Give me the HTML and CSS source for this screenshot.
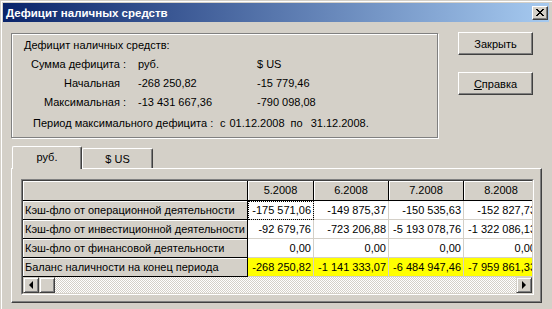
FILE: index.html
```html
<!DOCTYPE html>
<html>
	<head>
		<meta charset="UTF-8">
		<title>Дефицит наличных средств</title>
		<link rel="stylesheet" href="styles.css">
	</head>
	<body>
		<div class="window">
			<div class="caption">
				<span class="caption-text">Дефицит наличных средств</span>
				<span class="close-btn">
					<svg width="8" height="7" viewBox="0 0 8 7" shape-rendering="crispEdges"><path d="M0 0h2v1H0zM6 0h2v1H6zM1 1h2v1H1zM5 1h2v1H5zM2 2h4v1H2zM3 3h2v1H3zM2 4h4v1H2zM1 5h2v1H1zM5 5h2v1H5zM0 6h2v1H0zM6 6h2v1H6z" fill="#000"/></svg>
				</span>
			</div>
			<div class="client">
				<div class="top">
					<div class="group">
						<div class="group-title">Дефицит наличных средств:</div>
						<div class="sums">
							<span class="lbl">Сумма дефицита :</span><span>руб.</span><span>$ US</span>
							<span class="lbl lbl-pad">Начальная</span><span>-268 250,82</span><span>-15 779,46</span>
							<span class="lbl">Максимальная :</span><span>-13 431 667,36</span><span>-790 098,08</span>
						</div>
						<div class="period">
							<span class="period-label">Период максимального дефицита :</span>
							<span>с</span>
							<span class="d1">01.12.2008</span>
							<span class="d2">по</span>
							<span class="d3">31.12.2008.</span>
						</div>
					</div>
					<div class="buttons">
						<div class="btn">Закрыть</div>
						<div class="btn"><u>С</u>правка</div>
					</div>
				</div>
				<div class="tabs">
					<div class="tab tab-active">руб.</div>
					<div class="tab">$ US</div>
				</div>
				<div class="panel">
					<div class="grid">
						<div class="grid-inner">
							<div class="sheet">
								<div class="fx"></div>
								<div class="fx hd">5.2008</div>
								<div class="fx hd">6.2008</div>
								<div class="fx hd">7.2008</div>
								<div class="fx hd">8.2008</div>

								<div class="fx rl">Кэш-фло от операционной деятельности</div>
								<div class="cell focus">-175 571,06</div>
								<div class="cell">-149 875,37</div>
								<div class="cell">-150 535,63</div>
								<div class="cell">-152 827,73</div>

								<div class="fx rl">Кэш-фло от инвестиционной деятельности</div>
								<div class="cell">-92 679,76</div>
								<div class="cell">-723 206,88</div>
								<div class="cell">-5 193 078,76</div>
								<div class="cell">-1 322 086,13</div>

								<div class="fx rl">Кэш-фло от финансовой деятельности</div>
								<div class="cell">0,00</div>
								<div class="cell">0,00</div>
								<div class="cell">0,00</div>
								<div class="cell">0,00</div>

								<div class="fx rl">Баланс наличности на конец периода</div>
								<div class="cell total">-268 250,82</div>
								<div class="cell total">-1 141 333,07</div>
								<div class="cell total">-6 484 947,46</div>
								<div class="cell total">-7 959 861,33</div>
							</div>
							<div class="hscroll">
								<div class="sb-btn"><span class="arr-left"></span></div>
								<div class="sb-btn"></div>
								<div class="sb-track"></div>
								<div class="sb-btn"><span class="arr-right"></span></div>
							</div>
						</div>
					</div>
				</div>
			</div>
		</div>
	</body>
</html>
```

FILE: styles.css
```css
*{
	margin: 0;
	padding: 0;
	box-sizing: border-box;
}
body{
	background: #d4d0c8;
	font-family: "Liberation Sans", Arial, sans-serif;
	font-size: 11px;
	color: #000;
}
.window{
	width: 552px;
	height: 309px;
	overflow: hidden;
	background: #d4d0c8;
	padding: 3px 3px 0 3px;
	box-shadow: inset 1px 1px 0 #d4d0c8, inset 2px 2px 0 #fff;
}
.caption{
	height: 19px;
	display: flex;
	align-items: center;
	padding: 0 1px 0 3px;
	background: linear-gradient(to right, #0a246a, #a6caf0);
}
.caption-text{
	color: #fff;
	font-weight: bold;
	font-size: 11.5px;
}
.close-btn{
	margin-left: auto;
	width: 16px;
	height: 14px;
	display: flex;
	align-items: center;
	justify-content: center;
	background: #d4d0c8;
	border: 1px solid;
	border-color: #fff #404040 #404040 #fff;
	box-shadow: inset -1px -1px 0 #808080;
}
.close-btn svg{
	display: block;
}
.top{
	display: flex;
	align-items: flex-start;
	padding-left: 8px;
}
.group{
	width: 427px;
	height: 105px;
	margin-top: 11px;
	border: 1px solid #808080;
	box-shadow: inset 1px 1px 0 #fff, 1px 1px 0 #fff;
	padding: 2px 0 0 12px;
	line-height: 19px;
}
.sums{
	display: grid;
	grid-template-columns: 102px 107px auto;
	column-gap: 12px;
	grid-auto-rows: 19px;
}
.lbl{
	text-align: right;
}
.lbl-pad{
	padding-right: 6px;
}
.period{
	display: flex;
	margin-top: 2px;
	padding-left: 9px;
}
.period-label{
	width: 187px;
}
.d1{
	margin-left: 4px;
}
.d2{
	margin-left: 6px;
}
.d3{
	margin-left: 8px;
}
.buttons{
	display: flex;
	flex-direction: column;
	gap: 17px;
	margin: 10px 0 0 20px;
}
.btn{
	width: 75px;
	height: 23px;
	display: flex;
	align-items: center;
	justify-content: center;
	background: #d4d0c8;
	border: 1px solid;
	border-color: #fff #404040 #404040 #fff;
	box-shadow: inset -1px -1px 0 #808080;
}
.tabs{
	display: flex;
	align-items: flex-end;
	height: 22px;
	margin-top: 8px;
	padding-left: 9px;
}
.tab{
	width: 71px;
	height: 20px;
	display: flex;
	align-items: center;
	justify-content: center;
	background: #d4d0c8;
	border-top: 1px solid #fff;
	border-left: 1px solid #fff;
	border-right: 1px solid #404040;
	border-top-left-radius: 2px;
	border-top-right-radius: 2px;
	box-shadow: inset -1px 0 0 #808080;
}
.tab-active{
	width: 70px;
	height: 23px;
	margin-bottom: -1px;
	position: relative;
	z-index: 1;
	padding-bottom: 2px;
}
.panel{
	width: 531px;
	height: 135px;
	margin-left: 8px;
	border: 1px solid;
	border-color: #fff #404040 #404040 #fff;
	box-shadow: inset -1px -1px 0 #808080;
	padding: 10px 0 0 9px;
}
.grid{
	width: 513px;
	height: 116px;
	border: 1px solid;
	border-color: #808080 #fff #fff #808080;
}
.grid-inner{
	height: 114px;
	border: 1px solid;
	border-color: #404040 #d4d0c8 #d4d0c8 #404040;
	overflow: hidden;
	background: #d4d0c8;
}
.sheet{
	display: grid;
	grid-template-columns: 225px 66px 75px 75px 75px;
	grid-template-rows: 20px repeat(4, 19px);
	width: 516px;
}
.fx{
	background: #d4d0c8;
	border-right: 1px solid #000;
	border-bottom: 1px solid #000;
	box-shadow: inset 1px 1px 0 #fff;
	white-space: nowrap;
	overflow: hidden;
	line-height: 18px;
}
.hd{
	text-align: center;
	line-height: 19px;
}
.rl{
	padding-left: 2px;
}
.cell{
	background: #fff;
	border-right: 1px solid #d4d0c8;
	border-bottom: 1px solid #d4d0c8;
	text-align: right;
	padding-right: 2px;
	line-height: 18px;
	white-space: nowrap;
	overflow: hidden;
}
.total{
	background: #ffff00;
}
.focus{
	outline: 1px dotted #000;
	outline-offset: -1px;
}
.hscroll{
	display: flex;
	height: 16px;
	width: 509px;
}
.sb-btn{
	width: 16px;
	height: 16px;
	display: flex;
	align-items: center;
	justify-content: center;
	background: #d4d0c8;
	border: 1px solid;
	border-color: #d4d0c8 #404040 #404040 #d4d0c8;
	box-shadow: inset 1px 1px 0 #fff, inset -1px -1px 0 #808080;
}
.sb-track{
	flex: 1;
	background: repeating-conic-gradient(#fff 0 25%, #d4d0c8 0 50%) 0 0 / 2px 2px;
}
.arr-left{
	border-right: 4px solid #000;
	border-top: 4px solid transparent;
	border-bottom: 4px solid transparent;
}
.arr-right{
	border-left: 4px solid #000;
	border-top: 4px solid transparent;
	border-bottom: 4px solid transparent;
}
```
